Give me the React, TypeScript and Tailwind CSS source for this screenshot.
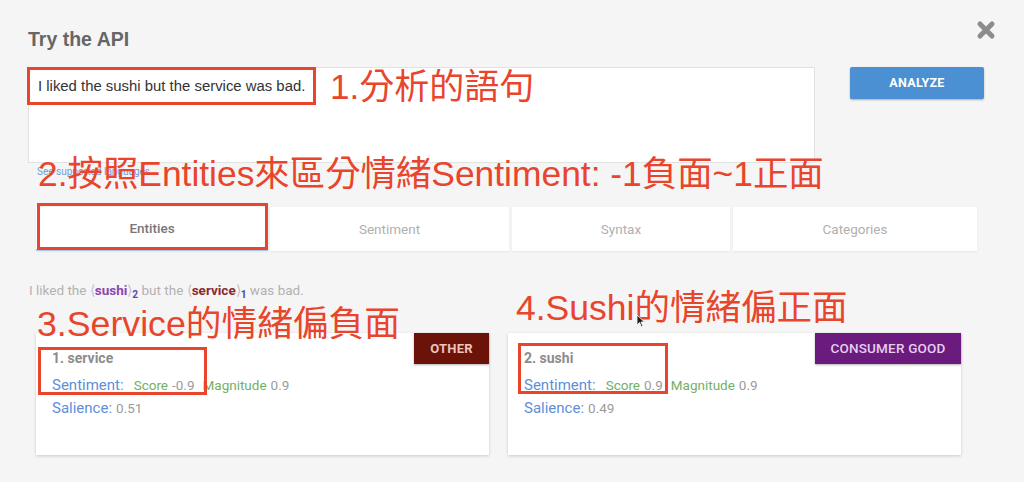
import React from "react";

const RED = "border-[#e8452c]";

function Tab({ label, width, active }: { label: string; width: string; active?: boolean }) {
  return (
    <div
      className={`${width} h-[44px] flex items-center justify-center bg-white shadow-[0_1px_2px_rgba(0,0,0,0.06)] text-[13.5px] ${
        active ? "text-[#777] font-medium border-b-2 border-[#a9c9ec]" : "text-[#b0b0b0]"
      }`}
    >
      {label}
    </div>
  );
}

interface Entity {
  name: string;
  score: string;
  magnitude: string;
  salience: string;
  badge: string;
  badgeClass: string;
}

const entities: Entity[] = [
  {
    name: "1. service",
    score: "-0.9",
    magnitude: "0.9",
    salience: "0.51",
    badge: "OTHER",
    badgeClass: "w-[75px] bg-[#6b1309] text-[#f0c3bc] font-bold text-[13px]",
  },
  {
    name: "2. sushi",
    score: "0.9",
    magnitude: "0.9",
    salience: "0.49",
    badge: "CONSUMER GOOD",
    badgeClass: "w-[146px] bg-[#6a1b7d] text-[#e6cdee] font-medium text-[13.5px]",
  },
];

function EntityCard({ e }: { e: Entity }) {
  return (
    <div className="relative w-[453px] h-[122px] bg-white shadow-[0_1px_3px_rgba(0,0,0,0.18)] pl-[16px] pt-[17px] text-[13.5px]">
      <div className={`absolute top-0 right-0 h-[31px] flex items-center justify-center tracking-[0.2px] shadow-[0_1px_2px_rgba(0,0,0,0.3)] ${e.badgeClass}`}>
        {e.badge}
      </div>
      <div className="h-[16px] leading-[16px] text-[14px] font-bold text-[#8c8c8c]">{e.name}</div>
      <div className="mt-[11px] h-[16px] leading-[16px] flex items-baseline">
        <span className="text-[15px] text-[#5e8fd8]">Sentiment:</span>
        <span className="ml-[10px] text-[#74b064]">Score</span>
        <span className="ml-[4px] text-[#9b9b9b]">{e.score}</span>
        <span className="ml-[8px] text-[#74b064]">Magnitude</span>
        <span className="ml-[4px] text-[#9b9b9b]">{e.magnitude}</span>
      </div>
      <div className="mt-[7px] h-[16px] leading-[16px] flex items-baseline">
        <span className="text-[15px] text-[#5e8fd8]">Salience:</span>
        <span className="ml-[4px] text-[#9b9b9b]">{e.salience}</span>
      </div>
    </div>
  );
}

export default function App() {
  const note = "absolute leading-none text-[#e8452c] whitespace-nowrap font-['Liberation_Sans','Noto_Sans_CJK_TC',sans-serif]";

  return (
    <div className="relative w-[1024px] h-[482px] overflow-hidden bg-[#f5f5f5] pl-[28px] pr-[28px] pt-[28px] font-['Roboto','Liberation_Sans',sans-serif]">
      {/* header */}
      <div className="flex items-start justify-between h-[22px]">
        <h2 className="text-[19.5px] leading-[22px] font-bold text-[#666] font-['Liberation_Sans',sans-serif]">Try the API</h2>
        <svg width="20" height="20" viewBox="0 0 20 20" className="-mt-[8px]">
          <path d="M4 4 L16 16 M16 4 L4 16" stroke="#8c8c8c" strokeWidth="5" strokeLinecap="round" />
        </svg>
      </div>

      {/* input */}
      <div className="mt-[17px] flex items-start">
        <div className="w-[787px] h-[96px] bg-white border border-[#e2e2e2] pl-[9px] pt-[10px]">
          <div className="text-[14.9px] leading-[16px] text-[#333] font-['Liberation_Sans',sans-serif]">
            I liked the sushi but the service was bad.
          </div>
        </div>
        <button className="ml-[35px] w-[134px] h-[32px] rounded-[2px] bg-[#4a90d2] text-white text-[12.5px] font-bold tracking-[0.3px] shadow-[0_1px_2px_rgba(0,0,0,0.3)]">
          ANALYZE
        </button>
      </div>
      <div className="mt-[3px] pl-[9px] text-[10px] leading-[12px] text-[#6d9fd8]">See supported languages</div>

      {/* tabs */}
      <div className="mt-[29px] ml-[8px] flex">
        <Tab label="Entities" width="w-[232px]" active />
        <div className="w-[2px]" />
        <Tab label="Sentiment" width="w-[239px]" />
        <div className="w-[3px]" />
        <Tab label="Syntax" width="w-[218px]" />
        <div className="w-[3px]" />
        <Tab label="Categories" width="w-[244px]" />
      </div>

      {/* sentence */}
      <div className="mt-[31px] ml-[1px] text-[13.5px] leading-[16px] text-[#b2b2b2]">
        I liked the <span className="text-[#c9b8e0]">⟨</span>
        <span className="font-bold text-[#8a45b0]">sushi</span>
        <span className="text-[#c9b8e0]">⟩</span>
        <sub className="font-bold text-[#5a4ab0]">2</sub> but the <span className="text-[#d2b8b8]">⟨</span>
        <span className="font-bold text-[#8b2c2c]">service</span>
        <span className="text-[#d2b8b8]">⟩</span>
        <sub className="font-bold text-[#3d4aa0]">1</sub> was bad.
      </div>

      {/* cards */}
      <div className="mt-[35px] ml-[8px] flex gap-[19px]">
        {entities.map((e) => (
          <EntityCard key={e.name} e={e} />
        ))}
      </div>

      {/* annotations */}
      <div className={`absolute left-[27px] top-[67px] w-[289px] h-[38px] border-[3px] ${RED}`} />
      <div className={`${note} text-[35px] left-[330px] top-[69px]`}>1.分析的語句</div>
      <div className={`${note} text-[35.4px] left-[38px] top-[157px]`}>2.按照Entities來區分情緒Sentiment: -1負面~1正面</div>
      <div className={`absolute left-[37px] top-[203px] w-[231px] h-[47px] border-[3px] ${RED}`} />
      <div className={`${note} text-[35.7px] left-[37px] top-[307px]`}>3.Service的情緒偏負面</div>
      <div className={`${note} text-[35.5px] left-[516px] top-[291px]`}>4.Sushi的情緒偏正面</div>
      <div className={`absolute left-[38px] top-[347px] w-[169px] h-[48px] border-[3px] ${RED}`} />
      <div className={`absolute left-[518px] top-[343px] w-[150px] h-[51px] border-[3px] ${RED}`} />

      {/* mouse cursor */}
      <svg className="absolute left-[636px] top-[314px]" width="10" height="14" viewBox="0 0 10 14">
        <path d="M1 1 L1 11 L3.5 8.5 L5.5 13 L7 12.3 L5 8 L8.5 8 Z" fill="#222" stroke="#fff" strokeWidth="0.8" />
      </svg>
    </div>
  );
}
